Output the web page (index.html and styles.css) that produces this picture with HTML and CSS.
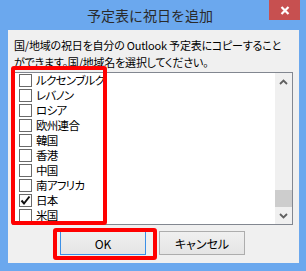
FILE: index.html
```
<!DOCTYPE html>
<html lang="ja">
<head>
    <meta charset="UTF-8">
    <meta name="viewport" content="width=device-width, initial-scale=1.0">
    <title>予定表に祝日を追加</title>
    <link rel="stylesheet" href="styles.css">
</head>
<body>
    <div class="window">
        <div class="titlebar">
            <span class="title">予定表に祝日を追加</span>
            <div class="close">
                <svg width="10" height="9" viewBox="0 0 10 9">
                    <path d="M1.5 1 L8.5 8 M8.5 1 L1.5 8" stroke="#fff" stroke-width="2.2" fill="none"/>
                </svg>
            </div>
        </div>

        <div class="client">
            <p class="desc">国/地域の祝日を自分の Outlook 予定表にコピーすること<br>ができます。国/地域名を選択してください。</p>

            <div class="listbox">
                <ul class="items">
                    <li><span class="box"></span>ルクセンブルク</li>
                    <li><span class="box"></span>レバノン</li>
                    <li><span class="box"></span>ロシア</li>
                    <li><span class="box"></span>欧州連合</li>
                    <li><span class="box"></span>韓国</li>
                    <li><span class="box"></span>香港</li>
                    <li><span class="box"></span>中国</li>
                    <li><span class="box"></span>南アフリカ</li>
                    <li><span class="box checked">
                        <svg width="11" height="11" viewBox="0 0 11 11">
                            <path d="M1.5 5.5 L4 8.5 L9.5 1.5" stroke="#111" stroke-width="2" fill="none"/>
                        </svg>
                    </span>日本</li>
                    <li><span class="box"></span>米国</li>
                </ul>
                <div class="scrollbar">
                    <div class="arrow">
                        <svg width="9" height="6" viewBox="0 0 9 6">
                            <path d="M1 5 L4.5 1.5 L8 5" stroke="#606060" stroke-width="1.8" fill="none"/>
                        </svg>
                    </div>
                    <div class="track"><div class="thumb"></div></div>
                    <div class="arrow">
                        <svg width="9" height="6" viewBox="0 0 9 6">
                            <path d="M1 1 L4.5 4.5 L8 1" stroke="#606060" stroke-width="1.8" fill="none"/>
                        </svg>
                    </div>
                </div>
            </div>

            <div class="buttons">
                <button class="btn default">OK</button>
                <button class="btn">キャンセル</button>
            </div>

            <div class="mark mark-list"></div>
            <div class="mark mark-ok"></div>
        </div>
    </div>
</body>
</html>
```

FILE: styles.css
```
body {
    margin: 0;
    font-family: "Noto Sans CJK JP", sans-serif;
    font-feature-settings: "palt";
}

.window {
    width: 306px;
    height: 271px;
    background: #6ba8ee;
    display: flex;
    flex-direction: column;
}

.titlebar {
    position: relative;
    height: 30px;
    display: flex;
    justify-content: center;
    align-items: center;
    padding-right: 6px;
}

.title {
    font-size: 14px;
    color: #2a2a2a;
    font-feature-settings: normal;
}

.close {
    position: absolute;
    top: 0;
    right: 6px;
    width: 31px;
    height: 20px;
    background: #c75050;
    display: flex;
    justify-content: center;
    align-items: center;
}

.client {
    position: relative;
    margin: 0 7px 8px 8px;
    flex: 1;
    background: #f0f0f0;
}

.desc {
    margin: 7px 0 1px 6px;
    font-size: 11px;
    line-height: 17px;
    letter-spacing: -0.2px;
    color: #000;
    white-space: nowrap;
}

.listbox {
    margin-left: 4px;
    width: 279px;
    height: 151px;
    border: 1px solid #828790;
    background: #fff;
    display: flex;
}

.items {
    list-style: none;
    margin: 0;
    padding: 0 0 0 6px;
    flex: 1;
    overflow: hidden;
}

.items li {
    height: 15px;
    line-height: 15px;
    display: flex;
    align-items: center;
    font-size: 11.5px;
    letter-spacing: -0.7px;
    color: #000;
    white-space: nowrap;
}

.box {
    width: 11px;
    height: 11px;
    border: 1px solid #6a6a6a;
    background: #fff;
    margin-right: 4px;
    display: flex;
    justify-content: center;
    align-items: center;
    flex-shrink: 0;
}

.scrollbar {
    width: 17px;
    background: #f0f0f0;
    display: flex;
    flex-direction: column;
}

.arrow {
    height: 17px;
    display: flex;
    justify-content: center;
    align-items: center;
}

.track {
    flex: 1;
    display: flex;
    flex-direction: column;
    justify-content: flex-end;
}

.thumb {
    height: 17px;
    background: #cdcdcd;
}

.buttons {
    margin: 6px 0 0 52px;
    display: flex;
    gap: 13px;
}

.btn {
    width: 86px;
    height: 24px;
    padding: 0;
    font-family: "Noto Sans CJK JP", sans-serif;
    font-feature-settings: "palt";
    font-size: 12px;
    color: #000;
    border: 1px solid #adadad;
    background: linear-gradient(#f0f0f0, #e5e5e5);
}

.btn.default {
    border-color: #3c8fe6;
}

.mark {
    position: absolute;
    border: 4px solid #ff0000;
    border-radius: 3px;
    box-sizing: border-box;
}

.mark-list {
    left: 3px;
    top: 36px;
    width: 96px;
    height: 159px;
}

.mark-ok {
    left: 45px;
    top: 198px;
    width: 104px;
    height: 32px;
}
```
